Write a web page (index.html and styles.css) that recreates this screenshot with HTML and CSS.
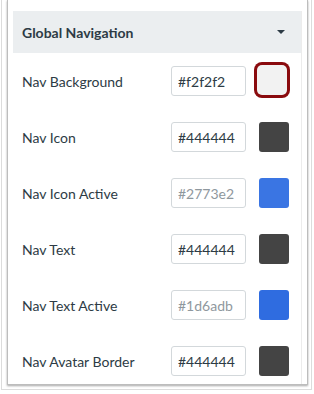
FILE: index.html
```html
<!DOCTYPE html>
<html>
<head>
<meta charset="utf-8">
<link rel="stylesheet" href="styles.css">
</head>
<body>
<div class="frame">
  <div class="panel">
    <div class="content">
      <div class="header">
        <span class="title">Global Navigation</span>
        <span class="caret"></span>
      </div>
      <div class="row">
        <span class="label">Nav Background</span>
        <input class="hex" type="text" value="#f2f2f2">
        <span class="swatch swatch-selected"></span>
      </div>
      <div class="row">
        <span class="label">Nav Icon</span>
        <input class="hex" type="text" value="#444444">
        <span class="swatch swatch-dark"></span>
      </div>
      <div class="row">
        <span class="label">Nav Icon Active</span>
        <input class="hex" type="text" placeholder="#2773e2">
        <span class="swatch swatch-blue1"></span>
      </div>
      <div class="row">
        <span class="label">Nav Text</span>
        <input class="hex" type="text" value="#444444">
        <span class="swatch swatch-dark"></span>
      </div>
      <div class="row">
        <span class="label">Nav Text Active</span>
        <input class="hex" type="text" placeholder="#1d6adb">
        <span class="swatch swatch-blue2"></span>
      </div>
      <div class="row">
        <span class="label">Nav Avatar Border</span>
        <input class="hex" type="text" value="#444444">
        <span class="swatch swatch-dark"></span>
      </div>
    </div>
  </div>
</div>
</body>
</html>
```
FILE: styles.css
```css
html, body {
  margin: 0;
  padding: 0;
  background: #ffffff;
}
body {
  font-family: Lato, "Liberation Sans", sans-serif;
  color: #2d3b45;
}
.frame {
  margin-left: 1px;
  width: 311px;
  height: 390px;
  border: 1px solid #dcdcdc;
  border-top: none;
  box-sizing: border-box;
}
.panel {
  margin-left: 5px;
  width: 301px;
  height: 385px;
  border: 1px solid #bdbdbd;
  border-top: none;
  box-sizing: border-box;
  box-shadow: 0 1px 2px rgba(0,0,0,0.35);
  padding: 11px 0 0 5px;
  overflow: hidden;
  background: #fff;
}
.content {
  width: 289px;
  border-right: 1px solid #ececec;
  box-sizing: border-box;
  height: 380px;
}
.header {
  height: 42px;
  background: #ebeef0;
  display: flex;
  align-items: center;
  justify-content: space-between;
  padding: 0 16px 0 9px;
}
.title {
  font-weight: 700;
  font-size: 14px;
}
.caret {
  width: 0;
  height: 0;
  border-left: 4px solid transparent;
  border-right: 4px solid transparent;
  border-top: 4px solid #2d3b45;
}
.row {
  height: 56px;
  display: grid;
  grid-template-columns: 1fr 75px 30px;
  column-gap: 13px;
  align-items: center;
  padding: 0 12px 0 9px;
}
.label {
  font-size: 14px;
}
.hex {
  width: 75px;
  height: 30px;
  box-sizing: border-box;
  border: 1px solid #d3d8db;
  border-radius: 3px;
  padding: 0 0 0 6px;
  font-family: Lato, "Liberation Sans", sans-serif;
  font-size: 14px;
  color: #2d3b45;
  outline: none;
  background: #fff;
}
.hex::placeholder {
  color: #8f989e;
}
.swatch {
  width: 30px;
  height: 30px;
  border-radius: 3px;
  box-sizing: border-box;
}
.swatch-selected {
  background: #f2f2f2;
  border-radius: 5px;
  box-shadow: 0 0 0 3px #8a0b0e;
  margin-left: -2px;
  margin-top: -3px;
}
.swatch-dark {
  background: #444444;
}
.swatch-blue1 {
  background: #3a75e3;
}
.swatch-blue2 {
  background: #2f6ce0;
}
```
